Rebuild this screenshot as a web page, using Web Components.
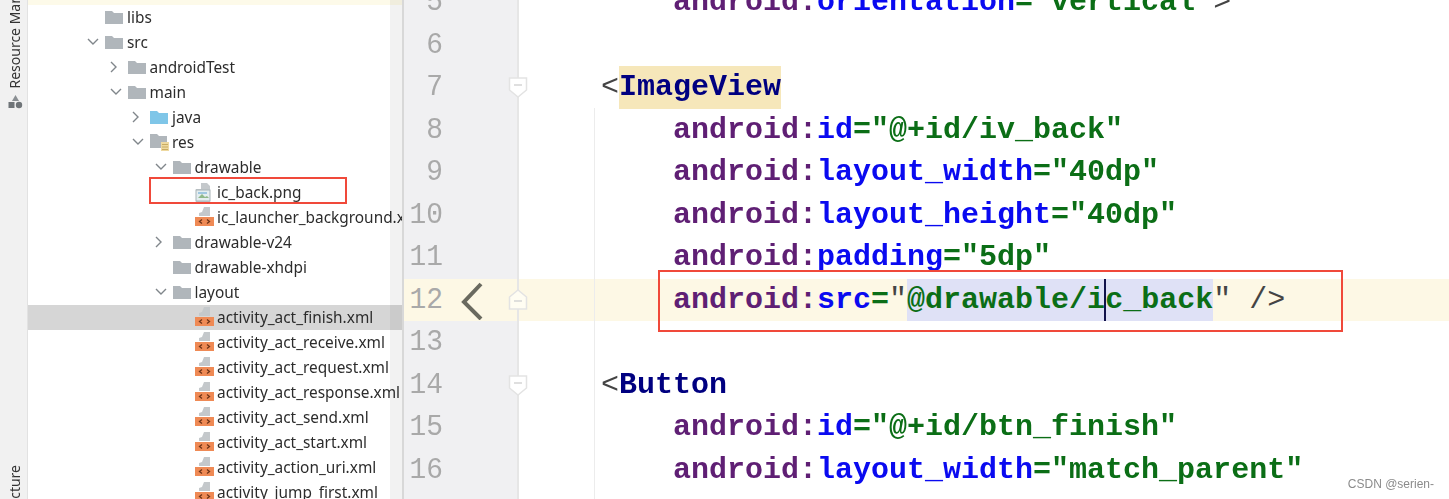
<!DOCTYPE html>
<html><head><meta charset="utf-8"><style>
html,body{margin:0;padding:0;background:#fff;overflow:hidden}
body{width:1449px;height:499px}
</style></head><body>
<ide-window>
<tool-rail slot="rail"></tool-rail>
<project-tree slot="tree"></project-tree>
<code-editor slot="editor"></code-editor>
</ide-window>
<script>
const ICONS={
folder:'<svg width="18" height="16" viewBox="0 0 18 16"><path d="M0 2h7l2 2h9v11H0z" fill="#b0b6bb"/></svg>',
blue:'<svg width="18" height="16" viewBox="0 0 18 16"><path d="M0 2h7l2 2h9v11H0z" fill="#7fc6e8"/></svg>',
res:'<svg width="19" height="18" viewBox="0 0 19 18"><path d="M0 1h7l2 2h8v12H0z" fill="#b0b6bb"/><rect x="11" y="9" width="8" height="9" fill="#eed9a0"/><path d="M12 11.5h6M12 14h6M12 16.500h6" stroke="#c9ac63"/></svg>',
img:'<svg width="16" height="19" viewBox="0 0 16 19"><path d="M1 6h5V0h6l3 3v16H1z" fill="#c4c8cb"/><rect x="1" y="7" width="14" height="11" fill="#e4eef0" stroke="#a9b4b8"/><path d="M3 15l4-4 3 3 2-1 2 2z" fill="#8fb98a"/><rect x="3" y="9" width="9" height="2" fill="#9fc7e0"/></svg>',
xml:'<svg width="20" height="20" viewBox="0 0 20 20"><path d="M4 9V6l3-1 2-5h6v9z" fill="#c4c8cb"/><rect x="0" y="10" width="19" height="9" fill="#ef8a55"/><path d="M7 12.500l-2.500 2 2.500 2M12 12.500l2.500 2-2.500 2" fill="none" stroke="#6d3418" stroke-width="1.300"/></svg>'
};
const CHEV={
open:'<svg width="12" height="8" viewBox="0 0 12 8"><path d="M1 1l5 5 5-5" fill="none" stroke="#80868b" stroke-width="1.400"/></svg>',
closed:'<svg width="8" height="12" viewBox="0 0 8 12"><path d="M1 1l5 5-5 5" fill="none" stroke="#80868b" stroke-width="1.400"/></svg>'
};
class IdeWindow extends HTMLElement{constructor(){super();this.attachShadow({mode:'open'}).innerHTML=`<style>
:host{display:flex;width:1449px;height:499px;overflow:hidden;position:relative;background:#fff}
.mark{position:absolute;right:15px;top:476px;font:12px/16px "Liberation Sans",sans-serif;color:#8b8b8b}
</style><slot name="rail"></slot><slot name="tree"></slot><slot name="editor"></slot><div class="mark">CSDN @serien-</div>`}}
class ToolRail extends HTMLElement{constructor(){super();this.attachShadow({mode:'open'}).innerHTML=`<style>
:host{display:flex;flex:none;width:28px;height:499px;box-sizing:border-box;background:#f1f1f1;border-right:1px solid #e2e2e2;flex-direction:column;align-items:center;overflow:hidden;font:14px/16px "Noto Sans",sans-serif;color:#333}
.v{writing-mode:vertical-rl;transform:rotate(180deg);white-space:nowrap;flex:none;filter:blur(.35px)}
.a{margin-top:-35px;margin-left:3px}
svg{flex:none;margin-top:6px;margin-left:3px;filter:blur(.4px)}
.sp{flex:1}
.b{margin-bottom:-27px;margin-left:3px}
</style><div class="v a">Resource Manager</div><svg width="15" height="14" viewBox="0 0 15 14"><path d="M7.500 0l3.500 6H4z" fill="#8a8f93"/><rect x="0.500" y="7" width="6" height="6" fill="#6f7478"/><circle cx="11" cy="10" r="3.200" fill="#6f7478"/></svg><div class="sp"></div><div class="v b">Structure</div>`}}
class TreeRow extends HTMLElement{
constructor(){super();this.attachShadow({mode:'open'})}
connectedCallback(){const d=+this.getAttribute('d'),c=this.getAttribute('c'),i=this.getAttribute('i')||'folder';
this.shadowRoot.innerHTML=`<style>
:host{display:flex;align-items:center;height:25px;flex:none;white-space:nowrap;padding-left:${59+d*22.5}px;font:15.4px/25px "Noto Sans",sans-serif;color:#2c2c2c}
:host([sel]){background:#d6d6d6}
.c{width:18px;flex:none;display:flex;align-items:center}
.i{width:22px;flex:none;display:flex;align-items:center}
</style><span class="c">${c?CHEV[c]:''}</span><span class="i">${ICONS[i]}</span><slot></slot>`}}
class ProjectTree extends HTMLElement{constructor(){super();
const rows=[[0,'', 'folder','libs'],[0,'open','folder','src'],[1,'closed','folder','androidTest'],[1,'open','folder','main'],[2,'closed','blue','java'],[2,'open','res','res'],[3,'open','folder','drawable'],[4,'','img','ic_back.png'],[4,'','xml','ic_launcher_background.xml'],[3,'closed','folder','drawable-v24'],[3,'','folder','drawable-xhdpi'],[3,'open','folder','layout'],[4,'','xml','activity_act_finish.xml'],[4,'','xml','activity_act_receive.xml'],[4,'','xml','activity_act_request.xml'],[4,'','xml','activity_act_response.xml'],[4,'','xml','activity_act_send.xml'],[4,'','xml','activity_act_start.xml'],[4,'','xml','activity_action_uri.xml'],[4,'','xml','activity_jump_first.xml']];
this.attachShadow({mode:'open'}).innerHTML=`<style>
:host{display:block;flex:none;width:376px;height:499px;position:relative;overflow:hidden;background:#fff;border-right:2px solid #d8d8d8;box-sizing:border-box}
.rows{display:flex;flex-direction:column;filter:blur(.35px)}
.top{height:4.5px;flex:none;background:#fdfae9}
.bar{position:absolute;right:0;top:0;bottom:0;width:12px;background:rgba(0,0,0,.05)}
.box{position:absolute;left:121px;top:177px;width:194px;height:23px;border:2px solid #f0493a}
</style><div class="rows"><div class="top"></div>${rows.map((r,n)=>`<tree-row d="${r[0]}" c="${r[1]}" i="${r[2]}"${n==12?' sel':''}>${r[3]}</tree-row>`).join('')}</div><div class="bar"></div><div class="box"></div>`}}
const A=(s)=>`<i class="ns">android:</i><i class="at">${s}</i>`;
const V=(s)=>`<i class="st">="${s}"</i>`;
const L=[
[5,`    ${A('orientation')}${V('vertical')}<i class="pn">&gt;</i>`],
[6,''],
[7,`<i class="pn">&lt;</i><i class="tg hl">ImageView</i>`,'d'],
[8,`    ${A('id')}${V('@+id/iv_back')}`],
[9,`    ${A('layout_width')}${V('40dp')}`],
[10,`    ${A('layout_height')}${V('40dp')}`],
[11,`    ${A('padding')}${V('5dp')}`],
[12,`    ${A('src')}<i class="st">=</i><i class="q">"</i><i class="st sel">@drawable/i<b class="caret"></b>c_back</i><i class="q">"</i> <i class="pn">/&gt;</i>`,'u'],
[13,''],
[14,`<i class="pn">&lt;</i><i class="tg">Button</i>`,'d'],
[15,`    ${A('id')}${V('@+id/btn_finish')}`],
[16,`    ${A('layout_width')}${V('match_parent')}`],
['','']
];
class CodeLine extends HTMLElement{constructor(){super();this.attachShadow({mode:'open'})}
connectedCallback(){const n=this.getAttribute('n'),f=this.getAttribute('f');
const fold=f?`<svg class="f" width="20" height="24" viewBox="0 0 20 24">${f=='d'?'<path d="M1.500 3h17v12l-8.500 7-8.500-7z"':'<path d="M1.500 21h17V9l-8.500-7-8.500 7z"'} fill="${f=='d'?'#fff':'#fffdf2'}" stroke="#e3e3e3" stroke-width="1.500"/><path d="M6 ${f=='d'?10:13}h8" stroke="#d4d4d4" stroke-width="1.500"/></svg>`:'';
this.shadowRoot.innerHTML=`<style>
:host{display:flex;height:42.5px;flex:none;position:relative}
:host([cur]){background:#fdf8e5}
.g{flex:none;width:115px;box-sizing:border-box;background:#f0f0f2;position:relative;display:flex;align-items:center;border-right:2px solid #e6e6e6}
:host([cur]) .g{background:#fdf8e5}
.n{width:39px;text-align:right;flex:none;font:30px/42.5px "Liberation Mono",monospace;color:#a9a9a9;transform:scaleX(.93);transform-origin:right}
.f{position:absolute;right:-11px;top:9px}
.back{position:absolute;left:54px;top:3px}
.t{padding-left:82px;white-space:pre;font:bold 30px/42.5px "Liberation Mono",monospace}
</style><div class="g"><span class="n">${n}</span>${this.hasAttribute('cur')?'<svg class="back" width="28" height="38" viewBox="0 0 28 38"><path d="M23 2L6 20l17 17" fill="none" stroke="#6a6a5f" stroke-width="4"/></svg>':''}${fold}</div><div class="t"><slot></slot></div>`}}
class CodeEditor extends HTMLElement{constructor(){super();
this.attachShadow({mode:'open'}).innerHTML=`<style>
:host{display:flex;flex:1;min-width:0;height:499px;position:relative;overflow:hidden;flex-direction:column;background:#fff}
.lines{margin-top:-18.75px;display:flex;flex-direction:column;flex:none;filter:blur(.35px)}
i{font-style:normal}
.ns{color:#5f1f74}.at{color:#0a0af0}.st{color:#0b6e16}.q{color:#444;font-weight:400}.pn{color:#444;font-weight:400}.tg{color:#000080}
.hl{background:#f6e7ba;display:inline-block;height:42.5px}
.sel{background:#dfe1f6;display:inline-block;height:42.500px;position:relative}
.caret{position:absolute;left:197px;top:0;width:2px;height:42.5px;background:#12124a}
.guide{position:absolute;left:190px;top:108px;bottom:0;width:1px;background:#ececec}
.box{position:absolute;left:254px;top:270px;width:681px;height:58px;border:2px solid #f0493a}
</style><div class="lines">${L.map(r=>`<code-line n="${r[0]}"${r[2]?` f="${r[2]}"`:''}${r[0]==12?' cur':''}>${r[1]}</code-line>`).join('')}</div><div class="guide"></div><div class="box"></div>`}}
customElements.define('ide-window',IdeWindow);
customElements.define('tool-rail',ToolRail);
customElements.define('tree-row',TreeRow);
customElements.define('project-tree',ProjectTree);
customElements.define('code-line',CodeLine);
customElements.define('code-editor',CodeEditor);
</script></body></html>
